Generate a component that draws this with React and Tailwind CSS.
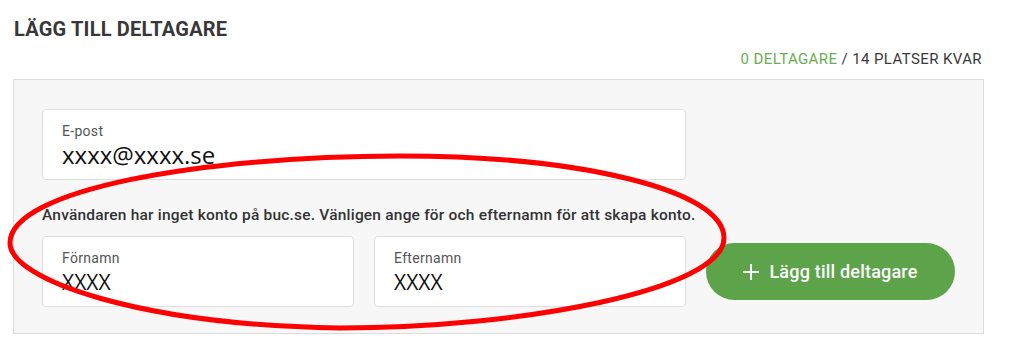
export default function App() {
  const field = (label, value, w, size) => (
    <div className={`${w} h-[71px] bg-white border border-[#dedede] rounded-[4px] pl-[19px] pt-[12px] box-border`}>
      <div className="text-[14px] leading-[18px] text-[#555] tracking-[0.3px]">{label}</div>
      <div className={`${size} leading-[28px] text-[#111] mt-[1px]`} style={{ fontFamily: '"Open Sans", sans-serif' }}>{value}</div>
    </div>
  );
  return (
    <div className="relative w-[1024px] h-[341px] bg-white overflow-hidden" style={{ fontFamily: 'Roboto, "Noto Sans", sans-serif' }}>
      <div className="pt-[17px] pl-[14px] text-[20px] leading-[24px] font-bold text-[#383838] tracking-[0.2px]">LÄGG TILL DELTAGARE</div>
      <div className="mt-[8px] pr-[42px] text-right text-[15px] leading-[20px] tracking-[0.4px]">
        <span className="text-[#6aad52]">0 DELTAGARE</span>
        <span className="text-[#3a3a3a]"> / 14 PLATSER KVAR</span>
      </div>
      <div className="mt-[10px] ml-[13px] w-[971px] h-[255px] box-border bg-[#f7f7f7] border border-[#dcdcdc] pl-[28px] pt-[29px]">
        {field("E-post", "xxxx@xxxx.se", "w-[644px]", "text-[24px]")}
        <div className="mt-[25px] text-[15.5px] leading-[20px] font-medium text-[#333] tracking-[0.2px] whitespace-nowrap">
          Användaren har inget konto på buc.se. Vänligen ange för och efternamn för att skapa konto.
        </div>
        <div className="mt-[11px] flex items-center gap-[20px]">
          {field("Förnamn", "XXXX", "w-[312px]", "text-[21px]")}
          {field("Efternamn", "XXXX", "w-[312px]", "text-[21px]")}
          <button className="w-[249px] h-[57px] rounded-full bg-[#5ca34a] text-white flex items-center justify-center gap-[10px] text-[18px] font-medium tracking-[0.2px]">
            <svg width="16" height="16" viewBox="0 0 16 16" fill="none" stroke="white" strokeWidth="2">
              <path d="M8 0v16M0 8h16" />
            </svg>
            <span>Lägg till deltagare</span>
          </button>
        </div>
      </div>
      <svg className="absolute left-0 top-0 pointer-events-none" width="1024" height="341" viewBox="0 0 1024 341" fill="none">
        <path d="M 10 243 C 10 190, 200 156, 400 156 C 580 156, 724 190, 724 238 C 724 290, 520 328, 340 328 C 140 325, 10 280, 10 243 Z" stroke="#ff0000" strokeWidth="5" />
      </svg>
    </div>
  );
}
